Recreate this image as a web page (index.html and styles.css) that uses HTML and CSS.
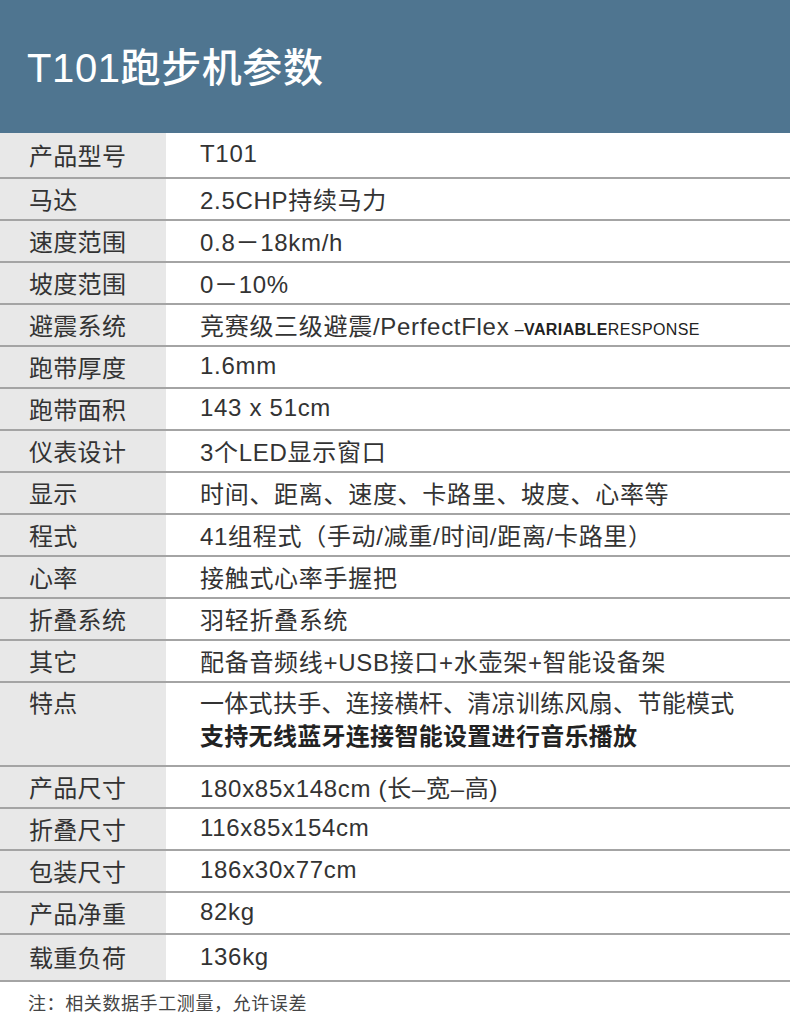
FILE: index.html
```html
<!DOCTYPE html>
<html lang="zh-CN">
<head>
<meta charset="utf-8">
<title>T101跑步机参数</title>
<link rel="stylesheet" href="styles.css">
</head>
<body>
<div class="page">
  <header class="header">
    <h1 class="title">T101跑步机参数</h1>
  </header>
  <div class="spec">
    <div class="row row-first"><div class="label">产品型号</div><div class="value">T101</div></div>
    <div class="row"><div class="label">马达</div><div class="value">2.5CHP持续马力</div></div>
    <div class="row"><div class="label">速度范围</div><div class="value">0.8－18km/h</div></div>
    <div class="row"><div class="label">坡度范围</div><div class="value">0－10%</div></div>
    <div class="row"><div class="label">避震系统</div><div class="value"><span>竞赛级三级避震/PerfectFlex <span class="small">–<b>VARIABLE</b>RESPONSE</span></span></div></div>
    <div class="row"><div class="label">跑带厚度</div><div class="value">1.6mm</div></div>
    <div class="row"><div class="label">跑带面积</div><div class="value">143 x 51cm</div></div>
    <div class="row"><div class="label">仪表设计</div><div class="value">3个LED显示窗口</div></div>
    <div class="row"><div class="label">显示</div><div class="value">时间、距离、速度、卡路里、坡度、心率等</div></div>
    <div class="row"><div class="label">程式</div><div class="value">41组程式（手动/减重/时间/距离/卡路里）</div></div>
    <div class="row"><div class="label">心率</div><div class="value">接触式心率手握把</div></div>
    <div class="row"><div class="label">折叠系统</div><div class="value">羽轻折叠系统</div></div>
    <div class="row"><div class="label">其它</div><div class="value">配备音频线+USB接口+水壶架+智能设备架</div></div>
    <div class="row row-tall"><div class="label">特点</div><div class="value"><div>一体式扶手、连接横杆、清凉训练风扇、节能模式</div><div class="strong">支持无线蓝牙连接智能设置进行音乐播放</div></div></div>
    <div class="row"><div class="label">产品尺寸</div><div class="value">180x85x148cm (长–宽–高)</div></div>
    <div class="row"><div class="label">折叠尺寸</div><div class="value">116x85x154cm</div></div>
    <div class="row"><div class="label">包装尺寸</div><div class="value">186x30x77cm</div></div>
    <div class="row"><div class="label">产品净重</div><div class="value">82kg</div></div>
    <div class="row row-last"><div class="label">载重负荷</div><div class="value">136kg</div></div>
  </div>
  <p class="note">注：相关数据手工测量，允许误差</p>
</div>
</body>
</html>
```

FILE: styles.css
```css
* { box-sizing: border-box; }
html, body { margin: 0; padding: 0; background: #ffffff; }
body {
  font-family: "Liberation Sans", "Noto Sans CJK SC", sans-serif;
  color: #333333;
}
.page { width: 790px; }
.header {
  height: 133px;
  background: #4f7590;
  display: flex;
  align-items: center;
  padding-left: 27px;
}
.title {
  margin: 0;
  padding-bottom: 3px;
  color: #ffffff;
  font-size: 40px;
  font-weight: 500;
  letter-spacing: 0.6px;
}
.spec { display: flex; flex-direction: column; }
.row {
  display: grid;
  grid-template-columns: 166px 1fr;
  height: 42px;
  border-bottom: 2px solid #a4a4a4;
}
.row-first { height: 46px; }
.row-last { height: 47px; }
.row-tall { height: 84px; }
.label {
  background: #e8e8e8;
  padding-left: 29px;
  padding-bottom: 2px;
  font-size: 24px;
  letter-spacing: 0.3px;
  display: flex;
  align-items: center;
}
.value {
  padding-left: 34px;
  padding-bottom: 2px;
  font-size: 24px;
  letter-spacing: 0.7px;
  display: flex;
  align-items: center;
  white-space: nowrap;
  color: #333333;
}
.row-tall .label, .row-tall .value {
  align-items: flex-start;
  padding-top: 4px;
  padding-bottom: 0;
  line-height: 33px;
}
.row-tall .value { flex-direction: column; letter-spacing: 0.3px; }
.strong { font-weight: 700; color: #222222; }
.small { font-size: 16px; margin-left: -2px; letter-spacing: 0.4px; color: #222; }
.small b { font-weight: 700; }
.note {
  margin: 0;
  padding: 7px 0 0 28px;
  font-size: 18px;
  line-height: 30px;
  letter-spacing: 0.6px;
  color: #444444;
}
```
